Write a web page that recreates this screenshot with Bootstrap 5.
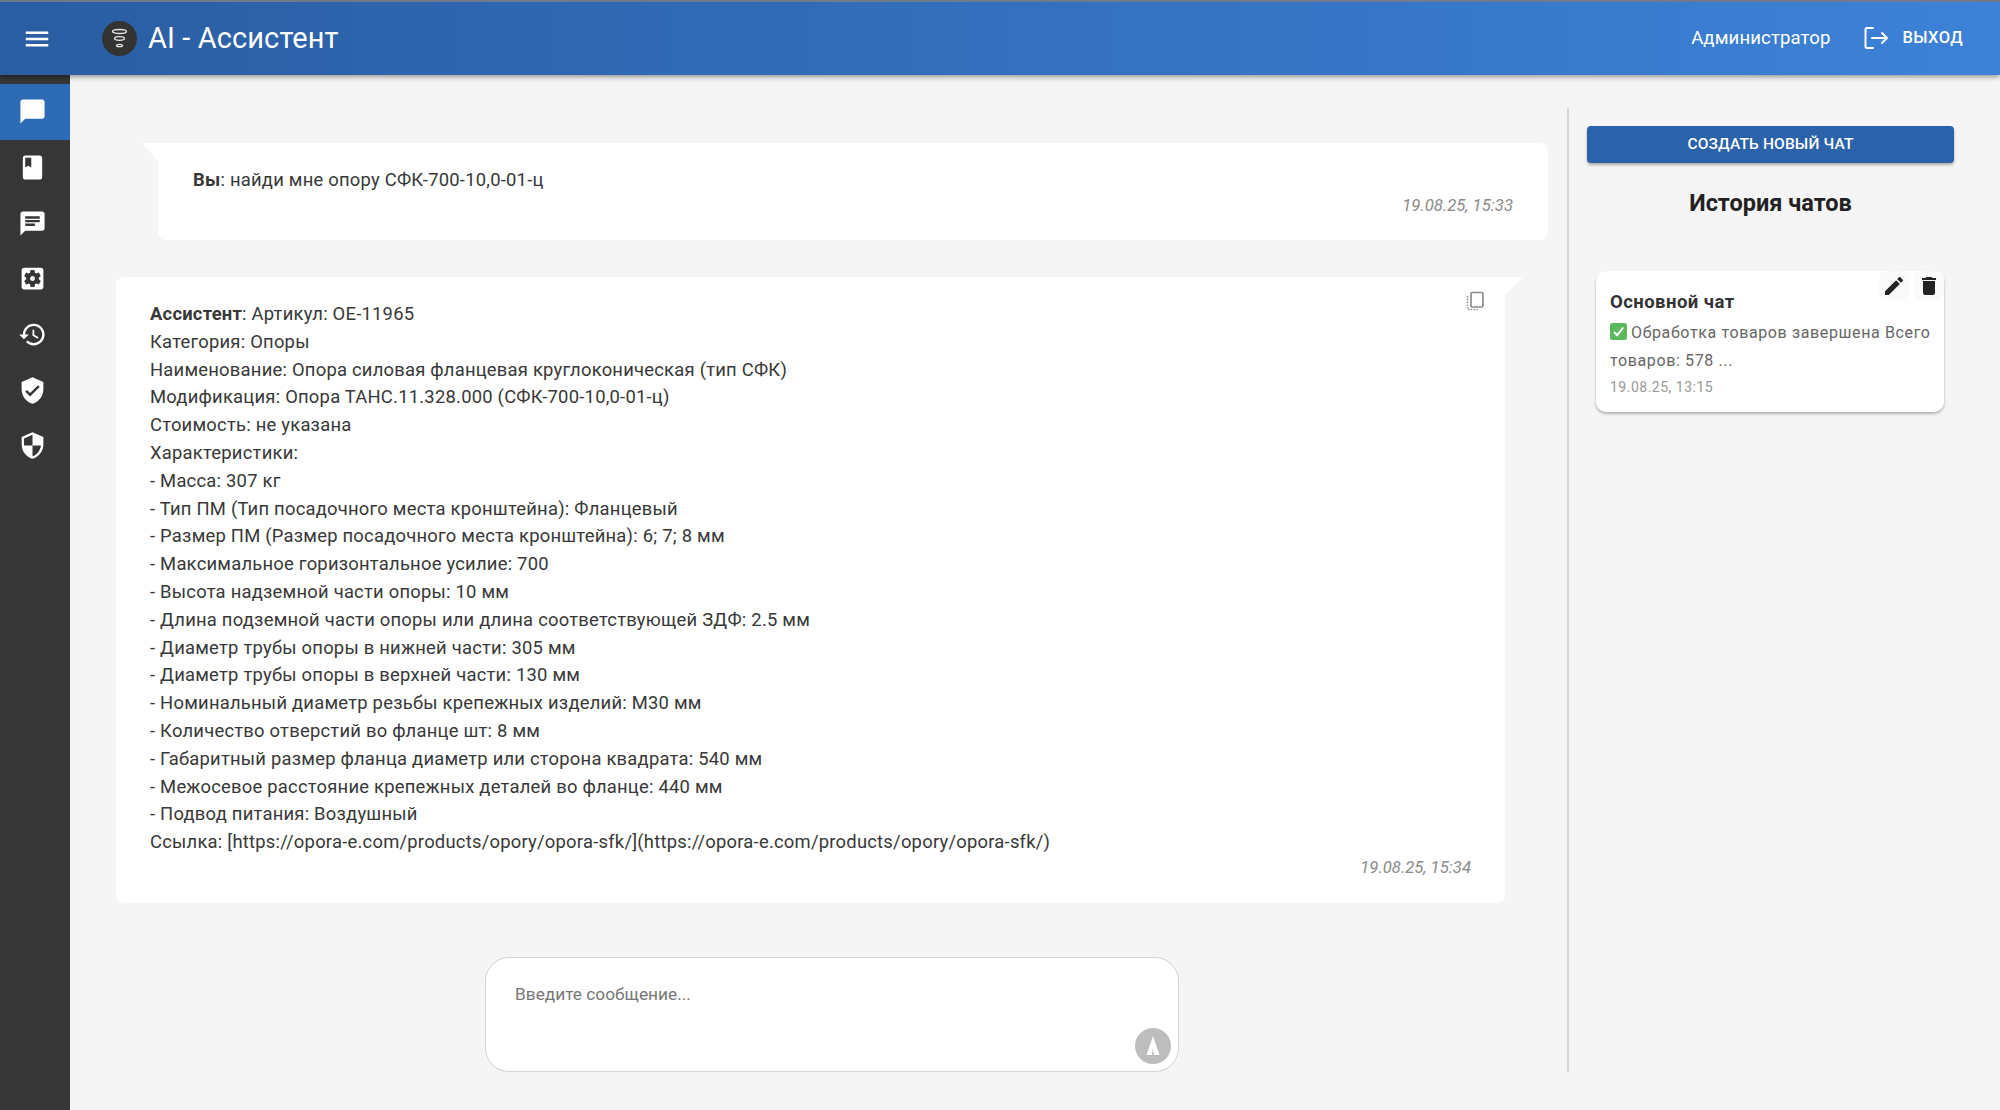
<!DOCTYPE html>
<html lang="ru">
<head>
<meta charset="utf-8">
<title>AI - Ассистент</title>
<link rel="stylesheet" href="https://cdn.jsdelivr.net/npm/bootstrap@5.3.0/dist/css/bootstrap.min.css">
<style>
html,body{height:1110px;overflow:hidden}
body{font-family:Roboto,"Liberation Sans",sans-serif;background:#f5f5f5;color:#333;font-size:18px}
.top-bar{height:75px;background:linear-gradient(90deg,#2a5da2 0%,#3d82d8 100%);border-top:2px solid #6d7b8c;box-shadow:0 2px 5px rgba(0,0,0,.4);z-index:5;padding:0 37px 0 25px;color:#fff;position:relative}
.burger{width:24px;height:24px;fill:#fff;margin-right:55px;transform:scale(1.25)}
.logo-disc{width:35px;height:35px;border-radius:50%;background:#333;margin-right:11px;margin-left:-2px}
.app-title{font-size:29px;font-weight:400;letter-spacing:.1px;line-height:1}
.user-name{font-size:18.6px;margin-right:34px;letter-spacing:.1px}
.exit-text{font-size:16.5px;font-weight:500;letter-spacing:.4px;margin-left:13px}
.side-rail{width:70px;background:#363636;padding-top:9px;flex:none}
.rail-item{height:55.7px;display:flex;align-items:center;justify-content:center;padding-right:6px}
.rail-item svg{width:29px;height:29px;fill:#fff}
.rail-item.on{background:#2d6cb5}
.work{height:1035px}
.chat-col{width:1497px;padding:68px 19px 0 0;flex:none}
.bubble{background:#fff;position:relative;color:#383838;font-size:18.4px;letter-spacing:.23px;line-height:27.8px}
.bubble-me{margin-left:88px;border-radius:0 8px 8px 8px;height:97px;padding:23px 35px 0 35px}
.bubble-me::before{content:"";position:absolute;left:-16px;top:0;width:16px;height:18px;background:#fff;clip-path:polygon(0 0,100% 0,100% 100%)}
.bubble-bot{margin:37px 43px 0 46px;border-radius:8px 0 8px 8px;height:626px;padding:23px 34px 0 34px}
.bubble-bot::after{content:"";position:absolute;right:-18px;top:0;width:18px;height:18px;background:#fff;clip-path:polygon(0 0,100% 0,0 100%)}
.stamp{font-style:italic;color:#8a8a8a;font-size:16.7px;letter-spacing:0;text-align:right;line-height:24px}
.copy-ico{position:absolute;right:16px;top:12px;width:24px;height:24px}
.composer{width:694px;height:115px;margin:54px 0 0 415px;background:#fff;border:1px solid #d4d4d4;border-radius:24px;padding:24px 29px;position:relative;color:#777;font-size:17.3px}
.send-btn{position:absolute;right:7px;bottom:7px;width:36px;height:36px;border-radius:50%;background:#bdbdbd;border:0;padding:0;display:flex;align-items:center;justify-content:center}
.hist-col{margin-top:33px;height:964px;width:402px;border-left:2px solid #d8d8d8;padding:18px 0 0 18px;flex:none}
.new-chat{width:367px;height:37px;background:#2b62aa;color:#fff;border:0;border-radius:4px;font-size:15.5px;font-weight:500;letter-spacing:.15px;box-shadow:0 2px 3px rgba(0,0,0,.3);padding:0}
.new-chat:hover{background:#2b62aa;color:#fff}
.hist-title{width:367px;text-align:center;font-size:23.5px;font-weight:700;color:#222;margin:26px 0 0;line-height:28px}
.hist-card{width:348px;height:141px;margin:54px 0 0 9px;background:#fff;border:0;border-radius:10px;box-shadow:0 2px 3px rgba(0,0,0,.28);padding:18px 6px 0 14px;position:relative}
.hist-name{font-size:18.5px;font-weight:700;color:#333;line-height:26px;letter-spacing:.45px}
.hist-snip{font-size:16px;color:#666;line-height:28px;letter-spacing:.62px;margin-top:4px}
.hist-snip svg{width:17px;height:17px;vertical-align:-2px;margin-right:4px}
.hist-date{font-size:14px;color:#999;letter-spacing:.5px;line-height:20px;margin-top:2px}
.card-acts{position:absolute;top:0;right:0;display:flex;gap:5px}
.act-btn{width:30px;height:29px;border:0;border-radius:8px;background:#fafafa;padding:0;display:flex;align-items:center;justify-content:center}
.act-btn svg{width:24px;height:24px;fill:#222}
</style>
</head>
<body>
<header class="top-bar d-flex align-items-center">
  <svg class="burger" viewBox="0 0 24 24"><path d="M3 18h18v-2H3v2zm0-5h18v-2H3v2zm0-7v2h18V6H3z"/></svg>
  <div class="logo-disc d-flex align-items-center justify-content-center">
    <svg width="35" height="35" viewBox="0 0 35 35" fill="none" stroke="#e8e8e8"><ellipse cx="17.5" cy="10.5" rx="7" ry="2" stroke-width="1.3"/><ellipse cx="17.5" cy="17.5" rx="5" ry="1.8" stroke-width="1.3"/><ellipse cx="17.5" cy="24.5" rx="3" ry="1.2" stroke-width="1.3"/></svg>
  </div>
  <div class="app-title">AI - Ассистент</div>
  <div class="ms-auto d-flex align-items-center">
    <span class="user-name">Администратор</span>
    <svg width="25" height="24" viewBox="0 0 25 24" fill="none" stroke="#fff" stroke-width="2" stroke-linecap="round" stroke-linejoin="round"><path d="M9 2H3a1.5 1.5 0 0 0-1.5 1.5v17A1.5 1.5 0 0 0 3 22h6"/><path d="M8 12h15M18 7l5 5-5 5"/></svg>
    <span class="exit-text">ВЫХОД</span>
  </div>
</header>
<div class="work d-flex">
  <nav class="side-rail">
    <div class="rail-item on"><svg viewBox="0 0 24 24"><path d="M20 2H4c-1.1 0-2 .9-2 2v18l4-4h14c1.1 0 2-.9 2-2V4c0-1.1-.9-2-2-2z"/></svg></div>
    <div class="rail-item"><svg viewBox="0 0 24 24"><path d="M18 2H6c-1.1 0-2 .9-2 2v16c0 1.1.9 2 2 2h12c1.1 0 2-.9 2-2V4c0-1.1-.9-2-2-2zM6 4h5v8l-2.5-1.5L6 12V4z"/></svg></div>
    <div class="rail-item"><svg viewBox="0 0 24 24"><path d="M20 2H4c-1.1 0-1.99.9-1.99 2L2 22l4-4h14c1.1 0 2-.9 2-2V4c0-1.1-.9-2-2-2zM6 9h12v2H6V9zm8 5H6v-2h8v2zm4-6H6V6h12v2z"/></svg></div>
    <div class="rail-item"><svg viewBox="0 0 24 24"><path d="M12 10c-1.1 0-2 .9-2 2s.9 2 2 2 2-.9 2-2-.9-2-2-2zm7-7H5c-1.11 0-2 .9-2 2v14c0 1.1.89 2 2 2h14c1.11 0 2-.9 2-2V5c0-1.1-.89-2-2-2zm-1.75 9c0 .23-.02.46-.05.68l1.48 1.16c.13.11.17.3.08.45l-1.4 2.42c-.09.15-.27.21-.43.15l-1.74-.7c-.36.28-.76.51-1.18.69l-.26 1.85c-.03.17-.18.3-.35.3h-2.8c-.17 0-.32-.13-.35-.29l-.26-1.85c-.43-.18-.82-.41-1.18-.69l-1.74.7c-.16.06-.34 0-.43-.15l-1.4-2.42c-.09-.15-.05-.34.08-.45l1.48-1.16c-.03-.23-.05-.46-.05-.69 0-.23.02-.46.05-.68l-1.48-1.16c-.13-.11-.17-.3-.08-.45l1.4-2.42c.09-.15.27-.21.43-.15l1.74.7c.36-.28.76-.51 1.18-.69l.26-1.85c.03-.17.18-.3.35-.3h2.8c.17 0 .32.13.35.29l.26 1.85c.43.18.82.41 1.18.69l1.74-.7c.16-.06.34 0 .43.15l1.4 2.42c.09.15.05.34-.08.45l-1.48 1.16c.03.23.05.46.05.69z"/></svg></div>
    <div class="rail-item"><svg viewBox="0 0 24 24"><path d="M13 3c-4.97 0-9 4.03-9 9H1l3.89 3.89.07.14L9 12H6c0-3.87 3.13-7 7-7s7 3.13 7 7-3.13 7-7 7c-1.93 0-3.68-.79-4.94-2.06l-1.42 1.42C8.27 19.99 10.51 21 13 21c4.97 0 9-4.03 9-9s-4.03-9-9-9zm-1 5v5l4.28 2.54.72-1.21-3.5-2.08V8H12z"/></svg></div>
    <div class="rail-item"><svg viewBox="0 0 24 24"><path d="M12 1L3 5v6c0 5.55 3.84 10.74 9 12 5.16-1.26 9-6.45 9-12V5l-9-4zm-2 16l-4-4 1.41-1.41L10 14.17l6.59-6.59L18 9l-8 8z"/></svg></div>
    <div class="rail-item"><svg viewBox="0 0 24 24"><path d="M12 1L3 5v6c0 5.55 3.84 10.74 9 12 5.16-1.26 9-6.45 9-12V5l-9-4zm0 10.99h7c-.53 4.12-3.28 7.79-7 8.94V12H5V6.3l7-3.11v8.8z"/></svg></div>
  </nav>
  <main class="chat-col">
    <div class="bubble bubble-me">
      <div><b>Вы</b>: найди мне опору СФК-700-10,0-01-ц</div>
      <div class="stamp">19.08.25, 15:33</div>
    </div>
    <div class="bubble bubble-bot">
      <svg class="copy-ico" viewBox="0 0 24 24" fill="none" stroke="#8c8c8c"><rect x="6" y="3.5" width="12" height="14.5" rx="1.2" stroke-width="1.7"/><path d="M2.5 7v13.5H14" stroke-width="1.6" stroke-dasharray="1.4 1.4"/></svg>
      <div><b>Ассистент</b>: Артикул: ОЕ-11965</div>
      <div>Категория: Опоры</div>
      <div>Наименование: Опора силовая фланцевая круглоконическая (тип СФК)</div>
      <div>Модификация: Опора ТАНС.11.328.000 (СФК-700-10,0-01-ц)</div>
      <div>Стоимость: не указана</div>
      <div>Характеристики:</div>
      <div>- Масса: 307 кг</div>
      <div>- Тип ПМ (Тип посадочного места кронштейна): Фланцевый</div>
      <div>- Размер ПМ (Размер посадочного места кронштейна): 6; 7; 8 мм</div>
      <div>- Максимальное горизонтальное усилие: 700</div>
      <div>- Высота надземной части опоры: 10 мм</div>
      <div>- Длина подземной части опоры или длина соответствующей ЗДФ: 2.5 мм</div>
      <div>- Диаметр трубы опоры в нижней части: 305 мм</div>
      <div>- Диаметр трубы опоры в верхней части: 130 мм</div>
      <div>- Номинальный диаметр резьбы крепежных изделий: М30 мм</div>
      <div>- Количество отверстий во фланце шт: 8 мм</div>
      <div>- Габаритный размер фланца диаметр или сторона квадрата: 540 мм</div>
      <div>- Межосевое расстояние крепежных деталей во фланце: 440 мм</div>
      <div>- Подвод питания: Воздушный</div>
      <div>Ссылка: [https://opora-e.com/products/opory/opora-sfk/](https://opora-e.com/products/opory/opora-sfk/)</div>
      <div class="stamp">19.08.25, 15:34</div>
    </div>
    <div class="composer">
      Введите сообщение...
      <button class="send-btn" type="button" aria-label="Отправить"><svg width="22" height="24" viewBox="0 0 22 24"><path d="M11 2l6.500 19H12L11 14l-1 7H4.500z" fill="#fff"/></svg></button>
    </div>
  </main>
  <aside class="hist-col">
    <button class="btn new-chat" type="button">СОЗДАТЬ НОВЫЙ ЧАТ</button>
    <h2 class="hist-title">История чатов</h2>
    <div class="card hist-card">
      <div class="card-acts">
        <button class="act-btn" type="button" aria-label="Изменить"><svg viewBox="0 0 24 24"><path d="M3 17.25V21h3.75L17.81 9.94l-3.75-3.75L3 17.25zM20.71 7.04c.39-.39.39-1.02 0-1.41l-2.34-2.34c-.39-.39-1.02-.39-1.41 0l-1.83 1.83 3.75 3.75 1.83-1.83z"/></svg></button>
        <button class="act-btn" type="button" aria-label="Удалить"><svg viewBox="0 0 24 24"><path d="M6 19c0 1.1.9 2 2 2h8c1.1 0 2-.9 2-2V7H6v12zM19 4h-3.5l-1-1h-5l-1 1H5v2h14V4z"/></svg></button>
      </div>
      <div class="hist-name">Основной чат</div>
      <div class="hist-snip"><svg viewBox="0 0 17 17"><rect width="17" height="17" rx="2.5" fill="#5cb85c"/><path d="M4 9l3.2 3.2L13.2 4.5" fill="none" stroke="#fff" stroke-width="2"/></svg>Обработка товаров завершена Всего товаров: 578 ...</div>
      <div class="hist-date">19.08.25, 13:15</div>
    </div>
  </aside>
</div>
<script src="https://cdn.jsdelivr.net/npm/bootstrap@5.3.0/dist/js/bootstrap.bundle.min.js"></script>
</body>
</html>
